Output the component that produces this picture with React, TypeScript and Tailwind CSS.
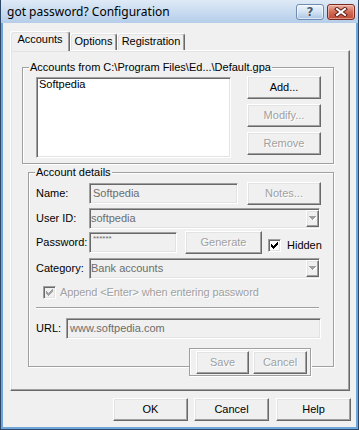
import React from "react";

const RAISED =
  "border border-t-white border-l-white border-r-[#696969] border-b-[#696969] shadow-[inset_-1px_-1px_0_#a0a0a0,inset_1px_1px_0_#e3e3e3] bg-[#f0f0f0]";
const SUNKEN =
  "border border-t-[#a0a0a0] border-l-[#a0a0a0] border-r-white border-b-white shadow-[inset_1px_1px_0_#696969,inset_-1px_-1px_0_#e3e3e3]";
const ETCHED = "border border-[#a0a0a0] shadow-[inset_1px_1px_0_#fff,1px_1px_0_#fff]";
const DIS = "text-[#a0a0a0] [text-shadow:1px_1px_0_#fff]";

function Btn({ label, disabled, className = "" }: { label: string; disabled?: boolean; className?: string }) {
  return (
    <div
      className={`${RAISED} flex shrink-0 items-center justify-center h-[23px] ${disabled ? DIS : "text-black"} ${className}`}
    >
      {label}
    </div>
  );
}

function CheckMark({ color }: { color: string }) {
  const cols: [number, number][] = [
    [2, 4],
    [3, 5],
    [4, 6],
    [3, 5],
    [2, 4],
    [1, 3],
    [0, 2],
  ];
  return (
    <svg width="7" height="7" shapeRendering="crispEdges">
      {cols.map(([a, b], i) => (
        <rect key={i} x={i} y={a} width={1} height={b - a + 1} fill={color} />
      ))}
    </svg>
  );
}

function CheckBox({ disabled }: { disabled?: boolean }) {
  return (
    <div
      className={`${SUNKEN} w-[13px] h-[13px] shrink-0 flex items-center justify-center ${disabled ? "bg-[#f0f0f0]" : "bg-white"}`}
    >
      <CheckMark color={disabled ? "#a0a0a0" : "#000"} />
    </div>
  );
}

function Arrow() {
  const rows = [7, 5, 3, 1];
  return (
    <svg width="8" height="5" shapeRendering="crispEdges">
      {rows.map((w, i) => (
        <rect key={"s" + i} x={(7 - w) / 2 + 1} y={i + 1} width={w} height={1} fill="#ffffff" />
      ))}
      {rows.map((w, i) => (
        <rect key={i} x={(7 - w) / 2} y={i} width={w} height={1} fill="#a0a0a0" />
      ))}
    </svg>
  );
}

function Combo({ text, className = "" }: { text: string; className?: string }) {
  return (
    <div className={`${SUNKEN} h-[21px] flex items-center bg-[#f0f0f0] ${className}`}>
      <span className="flex-1 pl-[1px] text-[#6d6d6d] whitespace-nowrap">{text}</span>
      <div className={`${RAISED} w-[13px] h-[17px] flex items-center justify-center`}>
        <Arrow />
      </div>
    </div>
  );
}

function TextBox({ text, className = "" }: { text: string; className?: string }) {
  return (
    <div className={`${SUNKEN} h-[21px] flex items-center bg-[#f0f0f0] pl-[3px] text-[#6d6d6d] whitespace-nowrap ${className}`}>
      {text}
    </div>
  );
}

export default function App() {
  return (
    <div className="w-[359px] h-[430px] flex flex-col bg-[#6fa6da] border-x border-b border-[#2c4767] relative overflow-hidden font-['Liberation_Sans',Arial,sans-serif] text-[11px] leading-[13px] text-black">
      {/* Title bar */}
      <div className="h-[23px] shrink-0 flex items-center bg-gradient-to-b from-[#dfeaf6] via-[#c9dcf0] to-[#b4cde9]">
        <span className="ml-[6px] font-['Noto_Sans',sans-serif] text-[12px] leading-[16px] text-black whitespace-nowrap">
          got password? Configuration
        </span>
        <div className="ml-auto flex items-center mr-[3px] mt-[1px]">
          <div className="w-[28px] h-[16px] rounded-[3px] border border-[#6f8cb0] bg-gradient-to-b from-[#eef4fb] via-[#d3e2f3] to-[#a9c4e4] flex items-center justify-center shadow-[inset_0_0_0_1px_rgba(255,255,255,0.6)]">
            <span className="font-['DejaVu_Sans',sans-serif] font-bold text-[12px] leading-[12px] text-[#4a5868] [text-shadow:0_0_1px_#fff,0_0_1px_#fff]">
              ?
            </span>
          </div>
          <div className="ml-[3px] w-[28px] h-[16px] rounded-[3px] border border-[#7a2a1e] bg-gradient-to-b from-[#eab0a3] via-[#d36a55] to-[#bf4a36] flex items-center justify-center shadow-[inset_0_0_0_1px_rgba(255,220,210,0.5)]">
            <svg width="16" height="10" viewBox="0 0 16 10">
              <path d="M4 2 L12 8 M12 2 L4 8" stroke="#5a1f15" strokeWidth="4" strokeLinecap="square" />
              <path d="M4 2 L12 8 M12 2 L4 8" stroke="#ffffff" strokeWidth="2" strokeLinecap="square" />
            </svg>
          </div>
        </div>
      </div>

      {/* Client area */}
      <div className="flex-1 mx-[2px] mb-[2px] bg-[#f0f0f0] pt-[8px] pl-[7px] flex flex-col">
        {/* Tabs */}
        <div className="flex items-end h-[19px] shrink-0">
          <div className="relative z-10 -mb-px h-[20px] w-[60px] bg-[#f0f0f0] border-t border-l border-r border-t-white border-l-white border-r-[#696969] rounded-t-[3px] shadow-[inset_-1px_0_0_#a0a0a0,inset_1px_1px_0_#e3e3e3] flex justify-center pt-[1px]">
            Accounts
          </div>
          <div className="h-[17px] w-[47px] border-t border-l border-r border-t-white border-l-white border-r-[#696969] rounded-t-[3px] shadow-[inset_-1px_0_0_#a0a0a0,inset_1px_1px_0_#e3e3e3] flex justify-center pt-[1px]">
            Options
          </div>
          <div className="h-[17px] w-[68px] border-t border-l border-r border-t-white border-l-white border-r-[#696969] rounded-t-[3px] shadow-[inset_-1px_0_0_#a0a0a0,inset_1px_1px_0_#e3e3e3] flex justify-center pt-[1px]">
            Registration
          </div>
        </div>

        {/* Tab panel */}
        <div className={`${RAISED} w-[340px] h-[341px] shrink-0`}>
          {/* Group 1 */}
          <div className={`${ETCHED} relative ml-[11px] mt-[16px] w-[312px] h-[97px]`}>
            <span className="absolute left-[6px] -top-[7px] bg-[#f0f0f0] px-[1px] whitespace-nowrap">
              Accounts from C:\Program Files\Ed...\Default.gpa
            </span>
            <div className="flex mt-[8px] ml-[13px]">
              <div className={`${SUNKEN} mt-[1px] w-[195px] h-[81px] bg-white pl-[2px]`}>Softpedia</div>
              <div className="ml-[16px] flex flex-col gap-[5px]">
                <Btn label="Add..." className="w-[74px]" />
                <Btn label="Modify..." disabled className="w-[74px]" />
                <Btn label="Remove" disabled className="w-[74px]" />
              </div>
            </div>
          </div>

          {/* Group 2 */}
          <div className={`${ETCHED} relative ml-[17px] mt-[8px] w-[306px] h-[195px]`}>
            <span className="absolute left-[6px] -top-[7px] bg-[#f0f0f0] px-[1px] whitespace-nowrap">Account details</span>

            <div className="flex items-center h-[23px] mt-[9px] pl-[7px]">
              <span className="w-[53px] shrink-0">Name:</span>
              <TextBox text="Softpedia" className="w-[149px]" />
              <Btn label="Notes..." disabled className="ml-[9px] w-[74px]" />
            </div>

            <div className="flex items-center h-[21px] mt-[3px] pl-[7px]">
              <span className="w-[53px] shrink-0">User ID:</span>
              <Combo text="softpedia" className="w-[231px]" />
            </div>

            <div className="flex items-center h-[23px] mt-[2px] pl-[7px]">
              <span className="w-[53px] shrink-0">Password:</span>
              <div className={`${SUNKEN} h-[21px] w-[88px] bg-[#f0f0f0] pl-[3px] text-[#6d6d6d] text-[8px] leading-[10px] pt-[1px]`}>
                ******
              </div>
              <Btn label="Generate" disabled className="ml-[8px] w-[77px]" />
              <div className="self-start mt-[8px] ml-[6px] flex items-center h-[13px]">
                <CheckBox />
                <span className="ml-[6px]">Hidden</span>
              </div>
            </div>

            <div className="flex items-center h-[21px] mt-[4px] pl-[7px]">
              <span className="w-[53px] shrink-0">Category:</span>
              <Combo text="Bank accounts" className="w-[231px]" />
            </div>

            <div className="flex items-center h-[15px] mt-[6px] pl-[14px]">
              <CheckBox disabled />
              <span className={`ml-[4px] ${DIS} whitespace-nowrap tracking-[-0.1px]`}>
                Append &lt;Enter&gt; when entering password
              </span>
            </div>

            <div className="mt-[7px] ml-[7px] w-[283px] h-[2px] border-t border-t-[#a0a0a0] border-b border-b-white" />

            <div className="flex items-center h-[21px] mt-[9px] pl-[7px]">
              <span className="w-[30px] shrink-0">URL:</span>
              <TextBox text="www.softpedia.com" className="w-[255px]" />
            </div>

            <div className={`${ETCHED} mt-[9px] ml-[160px] w-[122px] h-[28px] bg-[#f0f0f0] flex items-start`}>
              <Btn label="Save" disabled className="ml-[6px] mt-[2px] w-[53px]" />
              <Btn label="Cancel" disabled className="ml-[4px] mt-[2px] w-[54px]" />
            </div>
          </div>
        </div>

        {/* Bottom buttons */}
        <div className="flex mt-[7px] pl-[103px]">
          <Btn label="OK" className="w-[75px]" />
          <Btn label="Cancel" className="ml-[6px] w-[75px]" />
          <Btn label="Help" className="ml-[7px] w-[75px]" />
        </div>
      </div>
    </div>
  );
}
